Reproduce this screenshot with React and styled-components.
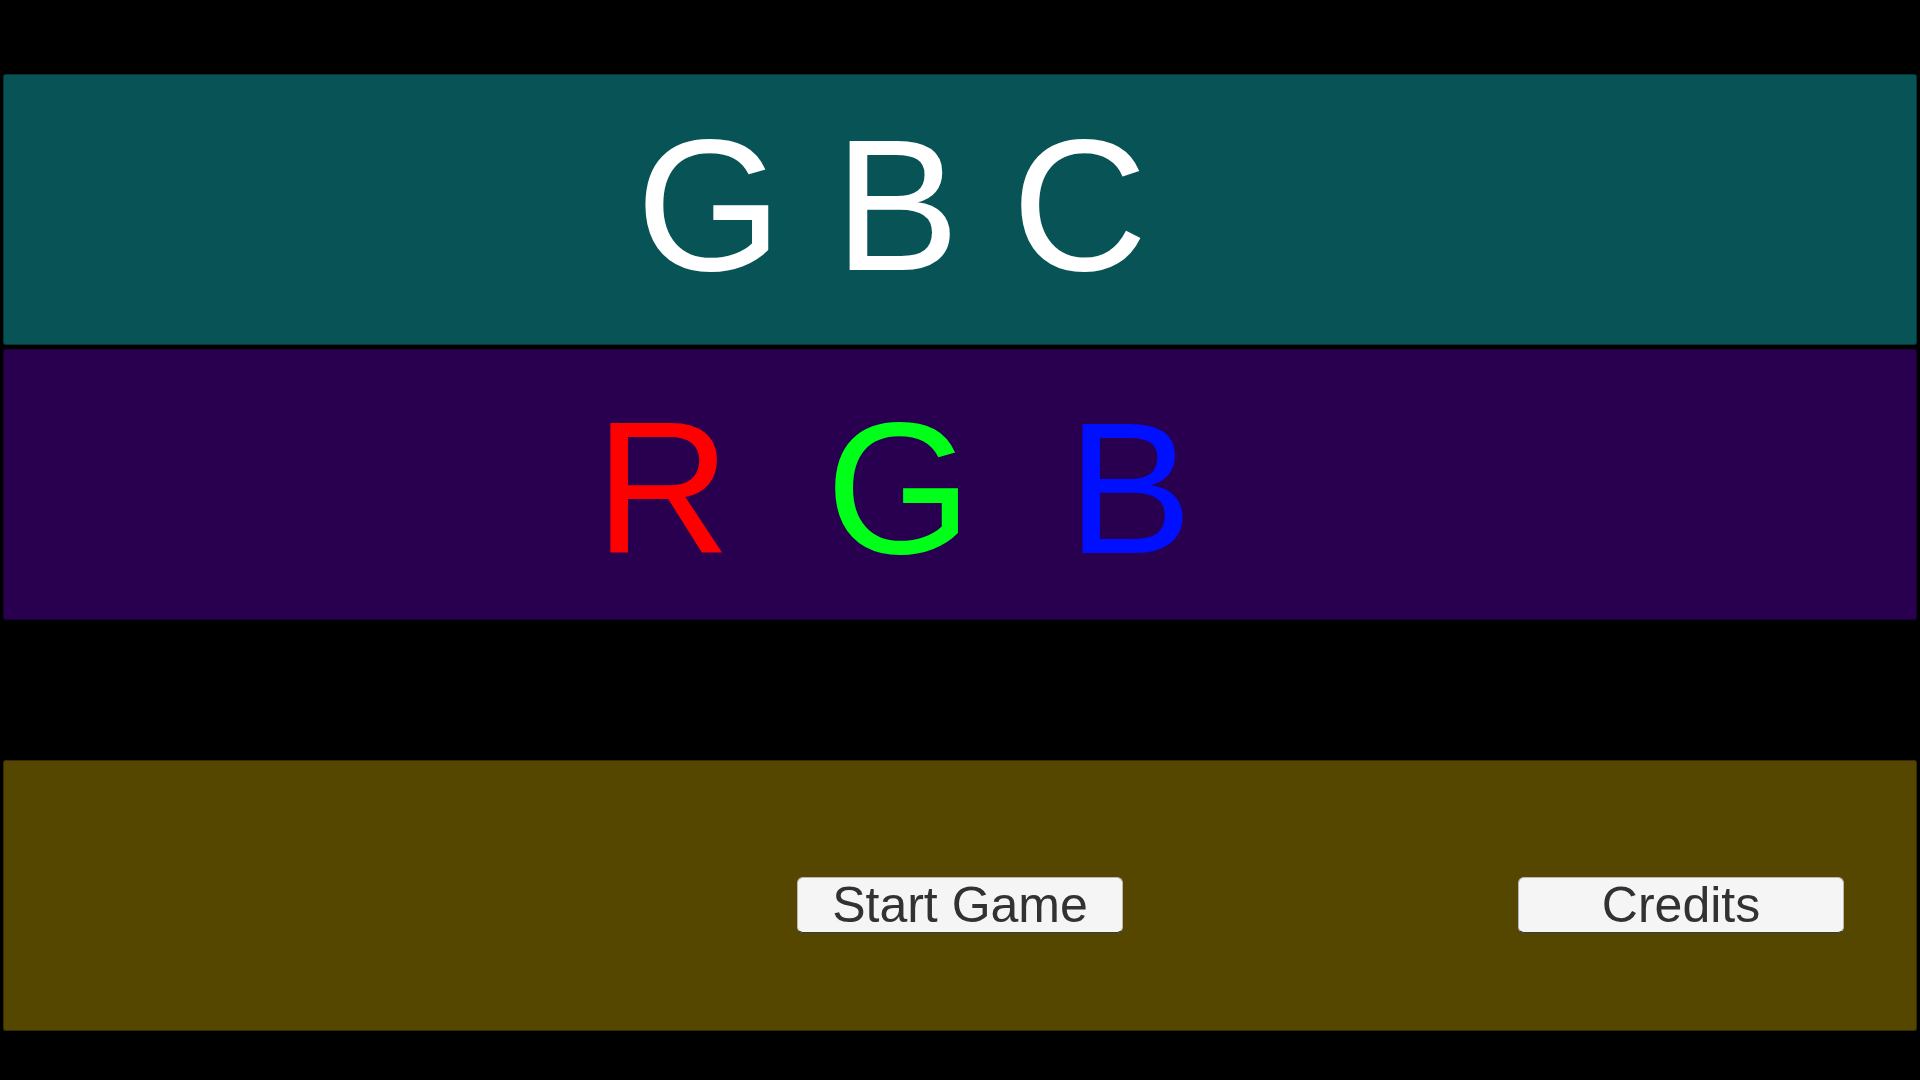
import React from 'react';
import styled, { createGlobalStyle } from 'styled-components';

const GlobalStyle = createGlobalStyle`
  html, body {
    margin: 0;
    padding: 0;
    background: #000;
  }

  body {
    font-family: "Liberation Sans", Arial, sans-serif;
  }
`;

const Screen = styled.div`
  width: 1920px;
  height: 1080px;
  background: #000;
  display: flex;
  flex-direction: column;
  padding: 74px 3px 0;
  box-sizing: border-box;
  overflow: hidden;
`;

const Panel = styled.div`
  height: 271px;
  box-sizing: border-box;
  margin-top: ${(p) => p.$gap || 0}px;
  background: ${(p) => p.$bg};
  border-radius: 3px;
  box-shadow: inset 0 0 0 1px rgba(0, 0, 0, 0.35);
  display: flex;
  align-items: flex-start;
  padding-left: ${(p) => p.$left}px;
  padding-top: ${(p) => p.$top}px;
`;

const Title = styled.h1`
  margin: 0;
  display: flex;
  gap: ${(p) => p.$spacing}px;
  font-family: "Liberation Sans", Arial, sans-serif;
  font-weight: 400;
  font-size: 188px;
  line-height: 188px;
`;

const Letter = styled.span`
  color: ${(p) => p.$color};
`;

const ButtonBar = styled(Panel)`
  align-items: center;
  gap: 395px;
`;

const MenuButton = styled.button`
  width: 326px;
  height: 56px;
  padding: 0;
  box-sizing: border-box;
  background: #f5f5f5;
  border: 1px solid #b8b8b8;
  border-bottom-color: #3a3a3a;
  border-radius: 6px;
  color: #323232;
  font-family: "Liberation Sans", Arial, sans-serif;
  font-size: 50px;
  line-height: 54px;
  cursor: pointer;
`;

const gbc = [
  { ch: 'G', color: '#ffffff' },
  { ch: 'B', color: '#ffffff' },
  { ch: 'C', color: '#ffffff' },
];

const rgb = [
  { ch: 'R', color: '#ff0000' },
  { ch: 'G', color: '#00ff19' },
  { ch: 'B', color: '#0010ff' },
];

export default function App() {
  return (
    <>
      <GlobalStyle />
      <Screen>
        <Panel $bg="#075355" $left={633} $top={37}>
          <Title $spacing={52}>
            {gbc.map((l, i) => (
              <Letter key={i} $color={l.color}>{l.ch}</Letter>
            ))}
          </Title>
        </Panel>
        <Panel $bg="#28004f" $gap={4} $left={592} $top={45}>
          <Title $spacing={95}>
            {rgb.map((l, i) => (
              <Letter key={i} $color={l.color}>{l.ch}</Letter>
            ))}
          </Title>
        </Panel>
        <ButtonBar $bg="#554600" $gap={140} $left={794} $top={19}>
          <MenuButton>Start Game</MenuButton>
          <MenuButton>Credits</MenuButton>
        </ButtonBar>
      </Screen>
    </>
  );
}
